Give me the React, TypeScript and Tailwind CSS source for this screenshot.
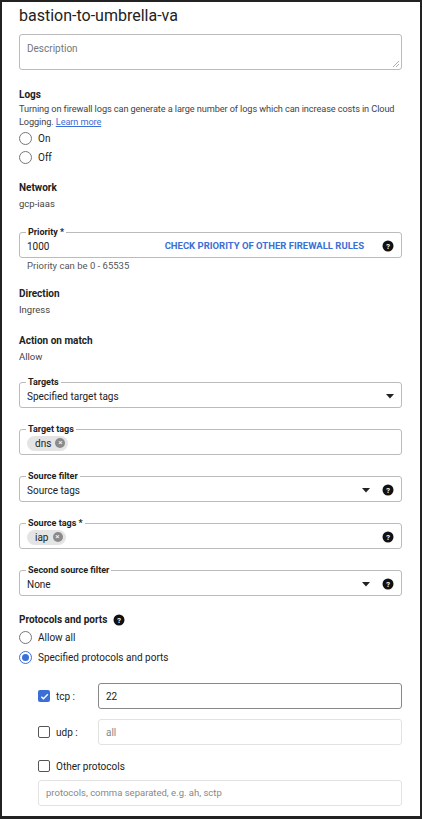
import React from "react";

const Help = () => (
  <svg width="12" height="12" viewBox="0 0 24 24" className="shrink-0">
    <circle cx="12" cy="12" r="11" fill="#111" />
    <text x="12" y="17" textAnchor="middle" fontSize="15" fontWeight="bold" fill="#fff" fontFamily="Roboto, sans-serif">?</text>
  </svg>
);

const Caret = () => (
  <svg width="8" height="5" viewBox="0 0 8 5" className="shrink-0">
    <path d="M0 0h8L4 4.5z" fill="#222" />
  </svg>
);

const Radio = ({ on }: { on?: boolean }) => (
  <span className={`w-[13px] h-[13px] rounded-full border flex items-center justify-center ${on ? "border-[#3b6fd6]" : "border-[#777]"}`}>
    {on && <span className="w-[7px] h-[7px] rounded-full bg-[#3b6fd6]" />}
  </span>
);

const Check = ({ on }: { on?: boolean }) =>
  on ? (
    <span className="w-[12px] h-[12px] rounded-[2px] bg-[#3b6fd6] flex items-center justify-center">
      <svg width="9" height="9" viewBox="0 0 10 10"><path d="M1.5 5.2l2.3 2.3L8.7 2.5" stroke="#fff" strokeWidth="1.5" fill="none" /></svg>
    </span>
  ) : (
    <span className="w-[12px] h-[12px] rounded-[2px] border border-[#555]" />
  );

const Chip = ({ t }: { t: string }) => (
  <span className="inline-flex items-center gap-[4px] bg-[#e4e4e4] rounded-full pl-[8px] pr-[3px] h-[15px] text-[10px] text-[#222]">
    {t}
    <span className="w-[10px] h-[10px] rounded-full bg-[#8a8a8a] text-white text-[8px] leading-[10px] text-center">×</span>
  </span>
);

const Field = ({ label, children, mt }: { label: string; children: React.ReactNode; mt: string }) => (
  <div className={`relative h-[26px] border border-[#bbb] rounded-[3px] flex items-center px-[7px] gap-[10px] ${mt}`}>
    <span className="absolute -top-[7px] left-[6px] bg-white px-[2px] text-[9px] font-bold leading-[12px] text-[#222]">{label}</span>
    <div className="flex-1 flex items-center pt-[2px] text-[10px] text-[#222]">{children}</div>
  </div>
);

export default function App() {
  return (
    <div className="w-[422px] h-[819px] bg-white border-2 border-[#222] border-b-[3px] pl-[17px] pr-[18px] text-[#222] overflow-hidden" style={{ fontFamily: "Roboto, 'Liberation Sans', sans-serif" }}>
      <div className="text-[16px] leading-[20px] mt-[4px]">bastion-to-umbrella-va</div>
      <div className="mt-[8px] h-[36px] border border-[#bbb] rounded-[3px] px-[7px] py-[6px] text-[10px] text-[#777] relative">
        Description
        <svg className="absolute right-[2px] bottom-[2px]" width="6" height="6" viewBox="0 0 6 6"><path d="M0 6L6 0M3 6L6 3" stroke="#999" strokeWidth="0.8" /></svg>
      </div>
      <div className="mt-[18px] text-[10px] font-bold leading-[13px]">Logs</div>
      <div className="text-[9.2px] tracking-[-0.1px] leading-[13px] text-[#444] mt-[1px]">
        Turning on firewall logs can generate a large number of logs which can increase costs in Cloud Logging. <span className="text-[#3b6fd6] underline">Learn more</span>
      </div>
      <div className="flex items-center gap-[6px] text-[10px] h-[18px] mt-[1px]"><Radio />On</div>
      <div className="flex items-center gap-[6px] text-[10px] h-[18px] mt-[1px]"><Radio />Off</div>
      <div className="mt-[15px] text-[10px] font-bold leading-[13px]">Network</div>
      <div className="mt-[3px] text-[9.5px] leading-[13px] text-[#444]">gcp-iaas</div>
      <Field label="Priority *" mt="mt-[22px]">
        <span className="flex-1">1000</span>
        <span className="text-[#3b6fd6] font-bold text-[9.5px] mr-[18px]">CHECK PRIORITY OF OTHER FIREWALL RULES</span>
        <Help />
      </Field>
      <div className="text-[9.5px] leading-[13px] text-[#555] pl-[8px] mt-[1px]">Priority can be 0 - 65535</div>
      <div className="mt-[15px] text-[10px] font-bold leading-[13px]">Direction</div>
      <div className="mt-[3px] text-[9.5px] leading-[13px] text-[#444]">Ingress</div>
      <div className="mt-[18px] text-[10px] font-bold leading-[13px]">Action on match</div>
      <div className="mt-[3px] text-[9.5px] leading-[13px] text-[#444]">Allow</div>
      <Field label="Targets" mt="mt-[19px]">
        <span className="flex-1">Specified target tags</span><Caret />
      </Field>
      <Field label="Target tags" mt="mt-[21px]"><Chip t="dns" /></Field>
      <Field label="Source filter" mt="mt-[21px]">
        <span className="flex-1">Source tags</span><Caret /><span className="w-[12px]" /><Help />
      </Field>
      <Field label="Source tags *" mt="mt-[21px]">
        <span className="flex-1"><Chip t="iap" /></span><Help />
      </Field>
      <Field label="Second source filter" mt="mt-[21px]">
        <span className="flex-1">None</span><Caret /><span className="w-[12px]" /><Help />
      </Field>
      <div className="mt-[17px] flex items-center gap-[6px] text-[10px] font-bold leading-[13px]">Protocols and ports <Help /></div>
      <div className="flex items-center gap-[6px] text-[10px] h-[18px] mt-[2px]"><Radio />Allow all</div>
      <div className="flex items-center gap-[6px] text-[10px] h-[18px] mt-[2px]"><Radio on />Specified protocols and ports</div>
      <div className="pl-[19px] mt-[17px]">
        <div className="flex items-center h-[26px]">
          <span className="w-[60px] flex items-center gap-[6px] text-[10px]"><Check on />tcp :</span>
          <div className="flex-1 h-full border border-[#888] rounded-[3px] flex items-center px-[7px] text-[10px]">22</div>
        </div>
        <div className="flex items-center h-[26px] mt-[10px]">
          <span className="w-[60px] flex items-center gap-[6px] text-[10px]"><Check />udp :</span>
          <div className="flex-1 h-full border border-[#e2e2e2] rounded-[3px] flex items-center px-[7px] text-[10px] text-[#888]">all</div>
        </div>
        <div className="flex items-center gap-[6px] text-[10px] h-[16px] mt-[13px]"><Check />Other protocols</div>
        <div className="h-[26px] mt-[6px] border border-[#e2e2e2] rounded-[3px] flex items-center px-[7px] text-[9.5px] text-[#888]">protocols, comma separated, e.g. ah, sctp</div>
      </div>
    </div>
  );
}
